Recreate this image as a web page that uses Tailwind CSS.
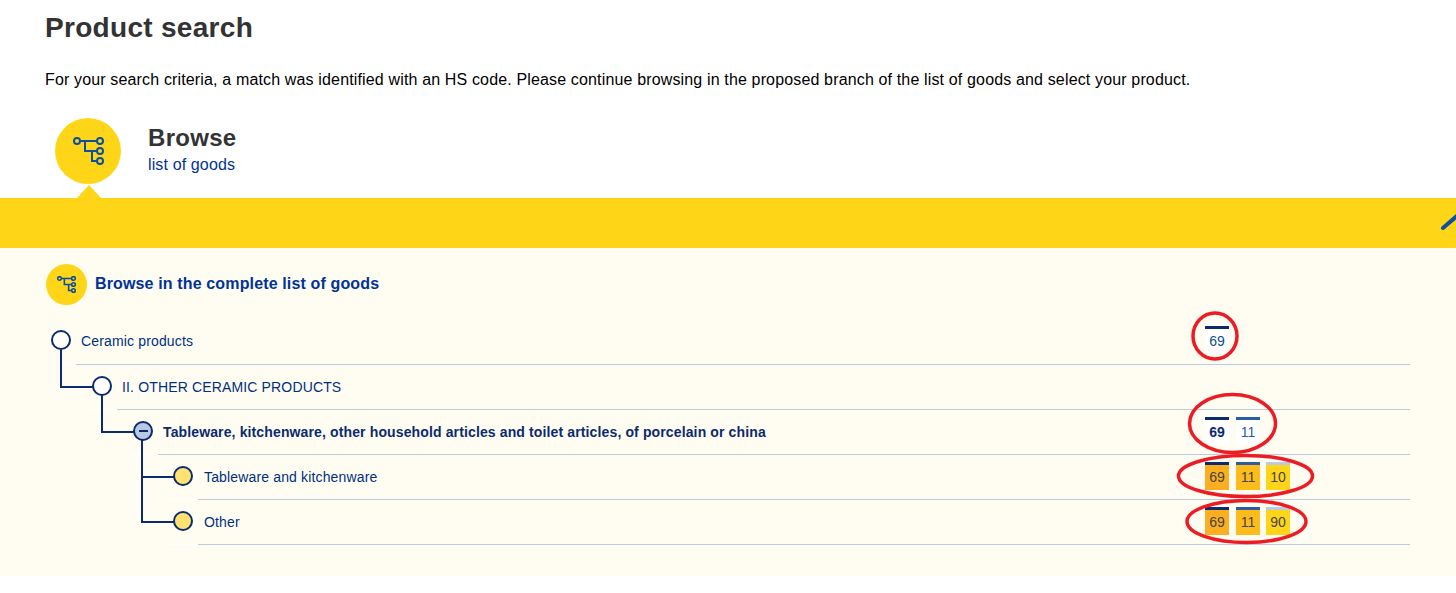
<!DOCTYPE html>
<html lang="en">
  <head>
    <meta charset="UTF-8" />
    <meta name="viewport" content="width=device-width, initial-scale=1.0" />
    <script src="https://cdn.jsdelivr.net/npm/@tailwindcss/browser@4"></script>
    <title>Product search</title>
  </head>

  <body class="relative h-[593px] overflow-hidden bg-white font-['Liberation_Sans',Arial,sans-serif]">
    <div class="px-[45px] pt-[10px]">
      <h1 class="text-[28px] leading-[36px] font-bold tracking-[0.3px] text-[#333]">Product search</h1>
      <p class="mt-[24px] text-[16px] leading-[20px] tracking-[0.15px] text-black">
        For your search criteria, a match was identified with an HS code. Please continue browsing in the proposed branch of the list of goods and select your product.
      </p>
    </div>

    <!-- browse header -->
    <div class="mt-[28px] ml-[55px] flex h-[80px] items-start">
      <div class="relative flex h-[66px] w-[66px] items-center justify-center rounded-full bg-[#ffd617]">
        <svg width="31" height="28" viewBox="0 0 31 28" fill="none" stroke="#0b4ea2" stroke-width="2">
          <circle cx="4" cy="4" r="3" />
          <circle cx="27" cy="4" r="3" />
          <circle cx="27" cy="14" r="3" />
          <circle cx="27" cy="24" r="3" />
          <path d="M7 4H24M12 4V14H24M19 14V24H24" />
        </svg>
        <div class="absolute top-[67px] left-[22px] h-0 w-0 border-x-[12px] border-b-[13px] border-x-transparent border-b-[#ffd617]"></div>
      </div>
      <div class="ml-[27px] pt-[5px]">
        <div class="text-[24px] leading-[30px] font-bold tracking-[0.3px] text-[#333]">Browse</div>
        <div class="mt-[2px] text-[16px] leading-[20px] tracking-[0.13px] text-[#003399]">list of goods</div>
      </div>
    </div>

    <!-- yellow band -->
    <div class="relative h-[50px] overflow-hidden bg-[#ffd617]">
      <svg class="absolute top-[16px] left-[1440px]" width="40" height="20" viewBox="0 0 40 20" fill="none" stroke="#0b4ea2" stroke-width="4" stroke-linecap="round">
        <path d="M3 14L18 1L33 14" />
      </svg>
    </div>

    <!-- panel -->
    <div class="h-[328px] bg-[#fffdf2] pt-[16px] pr-[46px] pl-[46px]">
      <div class="flex items-center">
        <div class="flex h-[41px] w-[41px] items-center justify-center rounded-full bg-[#ffd617]">
          <svg width="19" height="17" viewBox="0 0 31 28" fill="none" stroke="#0b4ea2" stroke-width="2.6">
            <circle cx="4" cy="4" r="3" />
            <circle cx="27" cy="4" r="3" />
            <circle cx="27" cy="14" r="3" />
            <circle cx="27" cy="24" r="3" />
            <path d="M7 4H24M12 4V14H24M19 14V24H24" />
          </svg>
        </div>
        <div class="ml-[8px] pb-[2px] text-[16px] font-bold tracking-[0.14px] text-[#003399]">Browse in the complete list of goods</div>
      </div>

      <div class="mt-[15px] flex flex-col text-[14px] tracking-[0.15px] text-[#00307f]">
        <!-- row 1 -->
        <div class="relative ml-[30px] flex h-[45px] items-center border-b border-[#bccce0] pl-[5px]">
          <span class="absolute bottom-[-1px] left-[-16px] h-[1px] w-[16px] bg-white"></span>
          <span class="absolute top-[10px] left-[-25px] z-10 h-[20px] w-[20px] rounded-full border-2 border-[#0b2a6f] bg-white"></span>
          <span class="flex-1 pb-[1px]">Ceramic products</span>
          <div class="flex w-[205px] gap-[7px] self-start pt-[6px] tracking-normal text-[#0b4c96]">
            <div class="h-[28px] w-[24px] border-t-[3px] border-[#0b2a6f] bg-white text-center leading-[24px]">69</div>
          </div>
        </div>
        <!-- row 2 -->
        <div class="relative ml-[71px] flex h-[45px] items-center border-b border-[#bccce0] pl-[5px]">
          <span class="absolute bottom-[-1px] left-[-30px] h-[1px] w-[30px] bg-white"></span>
          <span class="absolute top-[-15px] left-[-57px] h-[38px] w-[35px] border-b-2 border-l-2 border-[#0b2a6f]"></span>
          <span class="absolute top-[11px] left-[-25px] z-10 h-[20px] w-[20px] rounded-full border-2 border-[#0b2a6f] bg-white"></span>
          <span class="flex-1">II. OTHER CERAMIC PRODUCTS</span>
        </div>
        <!-- row 3 -->
        <div class="relative ml-[112px] flex h-[45px] items-center border-b border-[#bccce0] pl-[5px]">
          <span class="absolute bottom-[-1px] left-[-30px] h-[1px] w-[30px] bg-white"></span>
          <span class="absolute top-[-15px] left-[-57px] h-[38px] w-[35px] border-b-2 border-l-2 border-[#0b2a6f]"></span>
          <span class="absolute top-[11px] left-[-25px] z-10 flex h-[20px] w-[20px] items-center justify-center rounded-full border-2 border-[#0b2a6f] bg-[#b9c9e2]">
            <span class="h-[2px] w-[9px] bg-[#0b2a6f]"></span>
          </span>
          <span class="flex-1 font-bold tracking-[0.13px] text-[#0b2a6f]">Tableware, kitchenware, other household articles and toilet articles, of porcelain or china</span>
          <div class="flex w-[205px] gap-[7px] self-start pt-[7px] font-bold tracking-normal">
            <div class="h-[28px] w-[24px] border-t-[3px] border-[#0b2a6f] bg-white text-center leading-[24px] text-[#0b2a6f]">69</div>
            <div class="h-[28px] w-[24px] border-t-[3px] border-[#2a5da8] bg-white text-center leading-[24px] font-normal text-[#2a5da8]">11</div>
          </div>
        </div>
        <!-- row 4 -->
        <div class="relative ml-[152px] flex h-[45px] items-center border-b border-[#bccce0] pl-[6px]">
          <span class="absolute bottom-[-1px] left-[-30px] h-[1px] w-[30px] bg-white"></span>
          <span class="absolute top-[-15px] left-[-57px] h-[38px] w-[34px] border-b-2 border-l-2 border-[#0b2a6f]"></span>
          <span class="absolute top-[11px] left-[-25px] z-10 h-[20px] w-[20px] rounded-full border-2 border-[#0b2a6f] bg-[#ffe26f]"></span>
          <span class="flex-1">Tableware and kitchenware</span>
          <div class="flex w-[205px] gap-[7px] self-start pt-[7px] tracking-normal text-[#444]">
            <div class="h-[28px] w-[24px] border-t-[3px] border-[#0b2a6f] bg-[#fbae1f] text-center leading-[24px]">69</div>
            <div class="h-[28px] w-[24px] border-t-[3px] border-[#2a5da8] bg-[#fdbb1c] text-center leading-[24px]">11</div>
            <div class="-ml-[1px] h-[28px] w-[24px] border-t-[3px] border-[#b8cbe3] bg-[#ffd617] text-center leading-[24px]">10</div>
          </div>
        </div>
        <!-- row 5 -->
        <div class="relative ml-[152px] flex h-[45px] items-center border-b border-[#bccce0] pl-[6px]">
          <span class="absolute bottom-[-1px] left-[-30px] h-[1px] w-[30px] bg-white"></span>
          <span class="absolute top-[-37px] left-[-57px] h-[60px] w-[34px] border-b-2 border-l-2 border-[#0b2a6f]"></span>
          <span class="absolute top-[11px] left-[-25px] z-10 h-[20px] w-[20px] rounded-full border-2 border-[#0b2a6f] bg-[#ffe26f]"></span>
          <span class="flex-1">Other</span>
          <div class="flex w-[205px] gap-[7px] self-start pt-[7px] tracking-normal text-[#444]">
            <div class="h-[28px] w-[24px] border-t-[3px] border-[#0b2a6f] bg-[#fbae1f] text-center leading-[24px]">69</div>
            <div class="h-[28px] w-[24px] border-t-[3px] border-[#2a5da8] bg-[#fdbb1c] text-center leading-[24px]">11</div>
            <div class="-ml-[1px] h-[28px] w-[24px] border-t-[3px] border-[#b8cbe3] bg-[#ffd617] text-center leading-[24px]">90</div>
          </div>
        </div>
      </div>
    </div>

    <!-- red annotations drawn over the screenshot -->
    <svg class="absolute top-0 left-0 z-20" width="1456" height="593" fill="none" stroke="#ed1c24" stroke-width="3.5">
      <ellipse cx="1215" cy="336" rx="22" ry="23" />
      <ellipse cx="1232.5" cy="423.5" rx="43" ry="29" />
      <ellipse cx="1245.5" cy="476" rx="67" ry="20.5" />
      <ellipse cx="1246.5" cy="521.5" rx="59.5" ry="21" />
    </svg>
  </body>
</html>
